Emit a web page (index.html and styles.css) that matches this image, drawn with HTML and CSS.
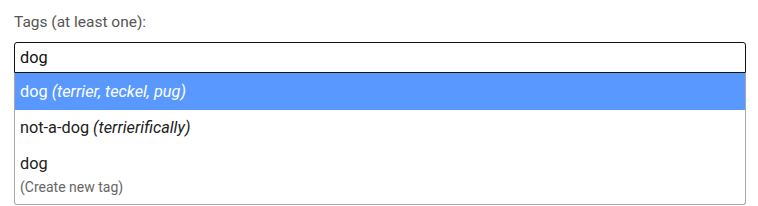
FILE: index.html
```html
<!DOCTYPE html>
<html lang="en">
<head>
    <meta charset="UTF-8">
    <title>Tags</title>
    <link rel="stylesheet" href="styles.css">
</head>
<body>
    <div class="field">
        <label class="field-label" for="tags">Tags (at least one):</label>
        <input type="text" id="tags" class="tag-input" value="dog">
        <ul class="suggestions">
            <li class="suggestion active">dog <em>(terrier, teckel, pug)</em></li>
            <li class="suggestion">not-a-dog <em>(terrierifically)</em></li>
            <li class="suggestion create">
                dog
                <span class="hint">(Create new tag)</span>
            </li>
        </ul>
    </div>
</body>
</html>
```

FILE: styles.css
```css
body {
    font-family: Roboto, "Liberation Sans", sans-serif;
    margin: 0;
    padding: 12px 12px 0 14px;
    background: white;
    color: #212121;
}
.field {
    width: 732px;
}
.field-label {
    display: block;
    font-size: 15.5px;
    line-height: 20px;
    color: #555;
    margin-bottom: 10px;
}
.tag-input {
    display: block;
    box-sizing: border-box;
    width: 100%;
    height: 31px;
    margin: 0;
    padding: 0 5px;
    border: 1px solid #111;
    border-radius: 3px 3px 0 0;
    font-family: inherit;
    font-size: 16.3px;
    color: #111;
    outline: none;
}
.suggestions {
    list-style: none;
    margin: 0;
    padding: 0;
    border: 1px solid #aaa;
    border-top: none;
    border-radius: 0 0 3px 3px;
    font-size: 16.3px;
}
.suggestion {
    padding: 8px 5px;
    line-height: 20px;
}
.suggestion em {
    font-style: italic;
}
.active {
    background: #5999ff;
    color: white;
    padding-top: 9px;
}
.create {
    padding-bottom: 8px;
}
.hint {
    display: block;
    font-size: 14px;
    line-height: 18px;
    color: #666;
    margin-top: 4px;
}
```
